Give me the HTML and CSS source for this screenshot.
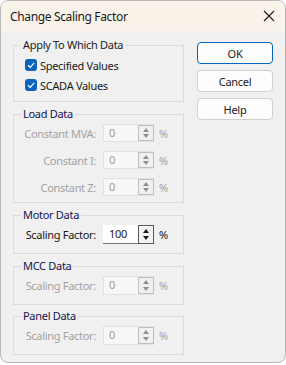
FILE: index.html
```html
<!DOCTYPE html>
<html>
<head>
<meta charset="utf-8">
<link rel="stylesheet" href="styles.css">
</head>
<body>
<div class="window">
  <div class="titlebar">
    <span class="title">Change Scaling Factor</span>
    <svg class="close" width="12" height="12" viewBox="0 0 12 12"><path d="M1 1L11 11M11 1L1 11" stroke="#1a1a1a" stroke-width="1.1" fill="none"/></svg>
  </div>
  <div class="content">
    <div class="groups">
      <div class="group g-apply">
        <span class="gtitle apply">Apply To Which Data</span>
        <div class="check-row">
          <span class="cb"><svg width="12" height="12" viewBox="0 0 12 12"><path d="M3 6.2L5.2 8.3L9.2 3.9" stroke="#fff" stroke-width="1.2" fill="none"/></svg></span>
          <span>Specified Values</span>
        </div>
        <div class="check-row">
          <span class="cb"><svg width="12" height="12" viewBox="0 0 12 12"><path d="M3 6.2L5.2 8.3L9.2 3.9" stroke="#fff" stroke-width="1.2" fill="none"/></svg></span>
          <span>SCADA Values</span>
        </div>
      </div>

      <div class="group g-load disabled">
        <span class="gtitle">Load Data</span>
        <div class="field-row">
          <span class="flabel">Constant MVA:</span>
          <div class="spin"><span class="spin-text">0</span><span class="spin-btn"><i class="up"></i><i class="down"></i></span></div>
          <span class="pct">%</span>
        </div>
        <div class="field-row">
          <span class="flabel">Constant I:</span>
          <div class="spin"><span class="spin-text">0</span><span class="spin-btn"><i class="up"></i><i class="down"></i></span></div>
          <span class="pct">%</span>
        </div>
        <div class="field-row">
          <span class="flabel">Constant Z:</span>
          <div class="spin"><span class="spin-text">0</span><span class="spin-btn"><i class="up"></i><i class="down"></i></span></div>
          <span class="pct">%</span>
        </div>
      </div>

      <div class="group g-single">
        <span class="gtitle">Motor Data</span>
        <div class="field-row">
          <span class="flabel">Scaling Factor:</span>
          <div class="spin"><span class="spin-text">100</span><span class="spin-btn"><i class="up"></i><i class="down"></i></span></div>
          <span class="pct">%</span>
        </div>
      </div>

      <div class="group g-single disabled">
        <span class="gtitle">MCC Data</span>
        <div class="field-row">
          <span class="flabel">Scaling Factor:</span>
          <div class="spin"><span class="spin-text">0</span><span class="spin-btn"><i class="up"></i><i class="down"></i></span></div>
          <span class="pct">%</span>
        </div>
      </div>

      <div class="group g-single g-panel disabled">
        <span class="gtitle">Panel Data</span>
        <div class="field-row">
          <span class="flabel">Scaling Factor:</span>
          <div class="spin"><span class="spin-text">0</span><span class="spin-btn"><i class="up"></i><i class="down"></i></span></div>
          <span class="pct">%</span>
        </div>
      </div>
    </div>

    <div class="buttons">
      <button class="btn default">OK</button>
      <button class="btn">Cancel</button>
      <button class="btn">Help</button>
    </div>
  </div>
</div>
</body>
</html>
```

FILE: styles.css
```css
* { box-sizing: border-box; }
html, body { margin: 0; padding: 0; background: #ffffff; }
body { width: 286px; height: 365px; font-family: "Noto Sans", "Open Sans", sans-serif; font-size: 11px; letter-spacing: -0.3px; color: #1a1a1a; }

.window {
  width: 286px;
  height: 363px;
  border: 1px solid #b9b9b9;
  border-radius: 8px;
  overflow: hidden;
  background: #f0f0f0;
  display: flex;
  flex-direction: column;
}

.titlebar {
  height: 30px;
  flex: none;
  background: #f9f2e8;
  display: flex;
  align-items: center;
  justify-content: space-between;
  padding: 0 10px 0 9px;
}
.title { font-size: 12px; letter-spacing: -0.35px; color: #1a1a1a; }
.close { display: block; margin-right: 0; }

.content {
  flex: 1;
  display: flex;
  padding: 0 12px 0 12px;
}

.groups {
  width: 171px;
  display: flex;
  flex-direction: column;
  gap: 12px;
  padding-top: 14px;
}

.group {
  position: relative;
  border: 1px solid #dcdcdc;
  padding: 9px 0 0 0;
}
.gtitle {
  position: absolute;
  top: -9px;
  left: 7px;
  padding: 0 2px;
  background: #f0f0f0;
  color: #141450;
  line-height: 16px;
}
.gtitle.apply { color: #222; }

.g-apply { height: 57px; padding: 9px 0 0 11px; }
.g-load { height: 89px; }
.g-single { height: 39px; }
.g-panel { margin-top: -1px; }

.check-row {
  height: 20px;
  display: flex;
  align-items: center;
  gap: 3px;
}
.cb {
  width: 12px;
  height: 12px;
  border-radius: 3px;
  background: #0a64b9;
  display: block;
  flex: none;
}
.cb svg { display: block; }

.field-row {
  display: flex;
  align-items: center;
  height: 18px;
  margin-bottom: 9px;
}
.g-single .field-row { height: 19px; }
.flabel {
  width: 82px;
  text-align: right;
  margin-right: 7px;
}
.spin {
  width: 51px;
  height: 100%;
  display: flex;
  background: #ffffff;
}
.spin-text {
  flex: 1;
  padding-left: 6px;
  line-height: 18px;
  border-bottom: 1px solid #7a7a7a;
  color: #1a1a1a;
}
.spin-btn {
  width: 16px;
  height: 100%;
  border: 1px solid #5a5a5a;
  background: #f3f3f3;
  display: flex;
  flex-direction: column;
  align-items: center;
  justify-content: space-evenly;
}
.spin-btn i {
  display: block;
  width: 0;
  height: 0;
  border-left: 3.5px solid transparent;
  border-right: 3.5px solid transparent;
}
.spin-btn i.up { border-bottom: 4px solid #1a1a1a; }
.spin-btn i.down { border-top: 4px solid #1a1a1a; }
.pct { margin-left: 5px; color: #1a1a1a; }

.disabled .flabel, .disabled .pct { color: #a3a3a3; }
.disabled .spin { background: #f7f7f7; border: 1px solid #e2e2e2; border-right: none; }
.disabled .spin-text { color: #a59a90; border-bottom: none; line-height: 16px; padding-left: 5px; }
.disabled .spin-btn { border-color: #bfbfbf; background: #f0f0f0; }
.disabled .spin-btn i.up { border-bottom-color: #8f8f8f; }
.disabled .spin-btn i.down { border-top-color: #8f8f8f; }

.buttons {
  display: flex;
  flex-direction: column;
  gap: 6px;
  padding-top: 11px;
  margin-left: 13px;
}
.btn {
  width: 76px;
  height: 22px;
  font-family: inherit;
  font-size: 11px;
  letter-spacing: -0.3px;
  color: #1a1a1a;
  background: #fdfdfd;
  border: 1px solid #d0d0d0;
  border-radius: 4px;
  padding: 0;
}
.btn.default { border-color: #0067c0; }
```
